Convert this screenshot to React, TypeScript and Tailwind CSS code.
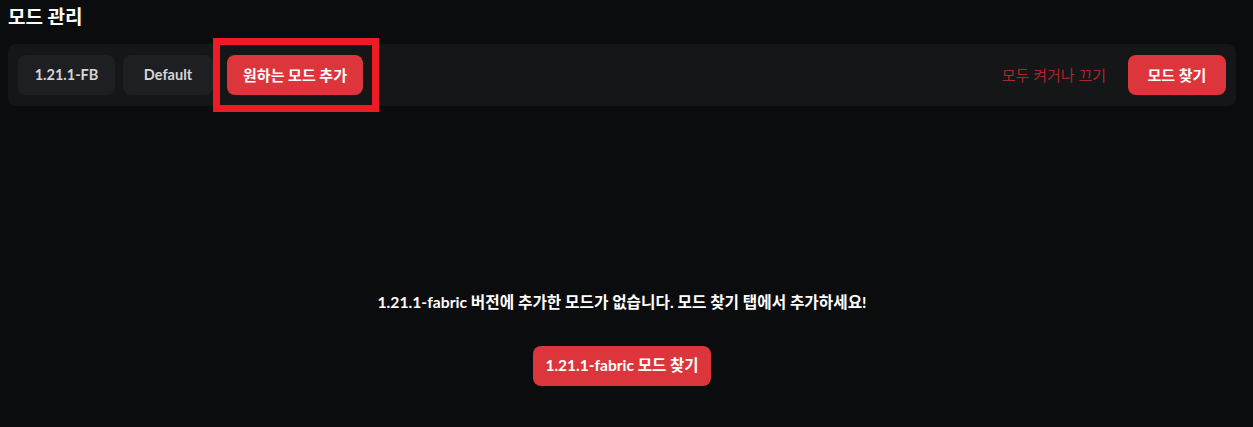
import React from 'react';

const font = { fontFamily: 'Lato, "Noto Sans CJK KR", sans-serif' };

export default function App() {
  return (
    <div className="min-h-[427px] w-full bg-[#0b0c0e] text-white" style={font}>
      <div className="pl-2 pr-[17px] pt-[4px]">
        <h1 className="text-[19px] font-bold leading-[26px] text-white">모드 관리</h1>

        <div className="mt-[14px] flex h-[62px] items-center justify-between rounded-lg bg-[#151618] px-[10px]">
          <div className="flex items-center gap-2">
            <button className="h-10 w-[97px] rounded-lg bg-[#1e1f22] text-[14.5px] font-bold text-[#d6d6d6]">
              1.21.1-FB
            </button>
            <button className="h-10 w-[90px] rounded-lg bg-[#1e1f22] text-[14.5px] font-bold text-[#d6d6d6]">
              Default
            </button>
            <div className="relative ml-[6px]">
              <button className="h-10 w-[136px] rounded-lg bg-[#dc363c] text-[15px] font-bold text-white">
                원하는 모드 추가
              </button>
              <div className="pointer-events-none absolute -bottom-[17px] -left-[14px] -right-[16px] -top-[17px] border-[7px] border-[#ed1c24]" />
            </div>
          </div>
          <div className="flex items-center gap-[22px]">
            <span className="text-[15px] text-[#a8282c]">모두 켜거나 끄기</span>
            <button className="h-10 w-[98px] rounded-lg bg-[#dc363c] text-[15px] font-bold text-white">
              모드 찾기
            </button>
          </div>
        </div>

        <div className="flex flex-col items-center">
          <p className="mt-[186px] text-[15.7px] font-bold leading-[20px] text-white">
            1.21.1-fabric 버전에 추가한 모드가 없습니다. 모드 찾기 탭에서 추가하세요!
          </p>
          <button className="mt-[34px] h-10 w-[178px] rounded-lg bg-[#dc363c] text-[15.5px] font-bold text-white">
            1.21.1-fabric 모드 찾기
          </button>
        </div>
      </div>
    </div>
  );
}
